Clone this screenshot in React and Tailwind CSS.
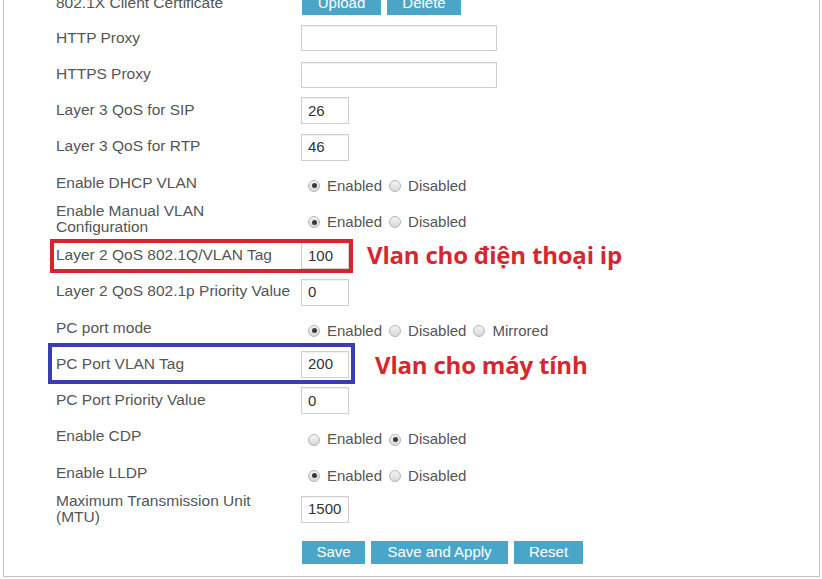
import React from 'react';

const rowH = 'h-[36.25px]';

function TextBox({ value = '', wide = false }) {
  return (
    <div
      className={
        (wide ? 'w-[196px] h-[26px]' : 'w-[48px] h-[27px]') +
        ' border border-[#cfcfcf] bg-white flex items-center pl-[6px] text-[15px] text-[#333] shadow-[inset_0_1px_1px_rgba(0,0,0,0.06)]'
      }
    >
      {value}
    </div>
  );
}

function Radio({ checked, label }) {
  return (
    <span className="flex items-center mr-[7px]">
      <span className="w-[12px] h-[12px] rounded-full border border-[#b5b5b5] bg-gradient-to-b from-[#f4f4f4] to-[#d8d8d8] flex items-center justify-center">
        {checked && <span className="w-[5px] h-[5px] rounded-full bg-[#3a3a3a]" />}
      </span>
      <span className="ml-[7px] text-[15px] text-[#555]">{label}</span>
    </span>
  );
}

function Radios({ options, selected }) {
  return (
    <div className="flex items-center pl-[7px] pt-[5px]">
      {options.map((o, i) => (
        <Radio key={o} label={o} checked={i === selected} />
      ))}
    </div>
  );
}

function Btn({ children, w }) {
  return (
    <div className={w + ' h-[23px] bg-[#4aa6c9] text-white text-[15px] flex items-center justify-center'}>
      {children}
    </div>
  );
}

const rows = [
  { label: 'HTTP Proxy', field: <TextBox wide /> },
  { label: 'HTTPS Proxy', field: <TextBox wide /> },
  { label: 'Layer 3 QoS for SIP', field: <TextBox value="26" /> },
  { label: 'Layer 3 QoS for RTP', field: <TextBox value="46" /> },
  { label: 'Enable DHCP VLAN', field: <Radios options={['Enabled', 'Disabled']} selected={0} /> },
  {
    label: (
      <>
        Enable Manual VLAN
        <br />
        Configuration
      </>
    ),
    field: <Radios options={['Enabled', 'Disabled']} selected={0} />,
  },
  { label: 'Layer 2 QoS 802.1Q/VLAN Tag', field: <TextBox value="100" /> },
  { label: 'Layer 2 QoS 802.1p Priority Value', field: <TextBox value="0" /> },
  { label: 'PC port mode', field: <Radios options={['Enabled', 'Disabled', 'Mirrored']} selected={0} /> },
  { label: 'PC Port VLAN Tag', field: <TextBox value="200" /> },
  { label: 'PC Port Priority Value', field: <TextBox value="0" /> },
  { label: 'Enable CDP', field: <Radios options={['Enabled', 'Disabled']} selected={1} /> },
  { label: 'Enable LLDP', field: <Radios options={['Enabled', 'Disabled']} selected={0} /> },
  {
    label: (
      <>
        Maximum Transmission Unit
        <br />
        (MTU)
      </>
    ),
    field: <TextBox value="1500" />,
  },
];

export default function App() {
  return (
    <div className="relative w-[822px] h-[579px] bg-white overflow-hidden font-['Liberation_Sans',Arial,sans-serif]">
      <div className="ml-[3px] w-[817px] h-[577px] border-x border-b border-[#c4c4c4] overflow-hidden">
        <div className="-mt-[16px] pl-[52px]">
          {/* first row is cut off by the top of the shot */}
          <div className={'flex ' + rowH}>
            <div className="w-[245px] flex items-center text-[15.5px] text-[#555]">802.1X Client Certificate</div>
            <div className="flex gap-[6px] pt-[8px] pl-[1px]">
              <Btn w="w-[79px]">Upload</Btn>
              <Btn w="w-[74px]">Delete</Btn>
            </div>
          </div>

          {rows.map((r, i) => (
            <div key={i} className={'flex items-center ' + rowH}>
              <div className="w-[245px] text-[15.5px] leading-[15.5px] text-[#555] -mt-[2px]">{r.label}</div>
              <div>{r.field}</div>
            </div>
          ))}

          <div className="flex gap-[6px] pl-[246px] pt-[13px]">
            <Btn w="w-[63px]">Save</Btn>
            <Btn w="w-[137px]">Save and Apply</Btn>
            <Btn w="w-[69px]">Reset</Btn>
          </div>
        </div>
      </div>

      {/* annotations drawn over the form */}
      <div className="absolute left-[50px] top-[239px] w-[303px] h-[34px] border-[4px] border-[#d9232d]" />
      <div className="absolute left-[48px] top-[343px] w-[307px] h-[41px] border-[4px] border-[#3b3db5]" />
      <div className="absolute left-[367px] top-[240px] text-[24px] font-bold text-[#d7262f] font-['Open_Sans',sans-serif] leading-[30px] tracking-[-0.2px] whitespace-nowrap">
        Vlan cho điện thoại ip
      </div>
      <div className="absolute left-[375px] top-[350px] text-[24px] font-bold text-[#d7262f] font-['Open_Sans',sans-serif] leading-[30px] tracking-[-0.2px] whitespace-nowrap">
        Vlan cho máy tính
      </div>
    </div>
  );
}
